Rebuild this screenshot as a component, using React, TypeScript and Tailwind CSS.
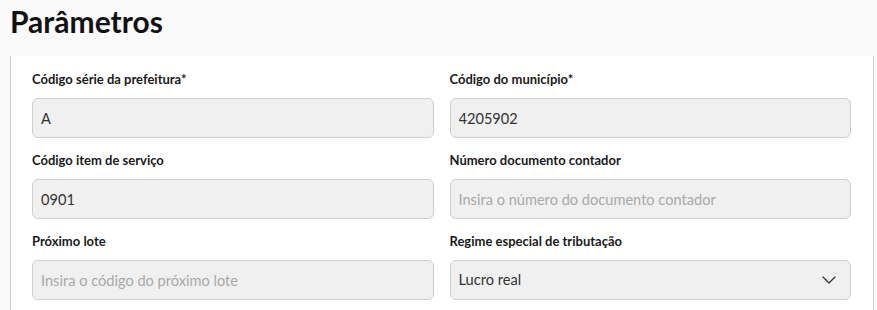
import { ChevronDown } from "lucide-react";

const font = { fontFamily: "Lato, 'Noto Sans', sans-serif" };

function Field({
  label,
  value,
  placeholder,
}: {
  label: string;
  value?: string;
  placeholder?: string;
}) {
  return (
    <div className="flex flex-col">
      <label className="mb-2 flex h-5 items-center text-[13px] font-bold text-[#1a1a1a]">{label}</label>
      <input
        readOnly
        value={value ?? ""}
        placeholder={placeholder}
        className="h-10 w-full rounded-md border border-[#cfcfcf] bg-[#f0f0f0] px-2 text-[14.6px] text-[#333] outline-none placeholder:text-[#a9a9a9]"
      />
    </div>
  );
}

export default function App() {
  return (
    <div className="min-h-[310px] bg-[#fafafa]" style={font}>
      <div className="flex h-14 items-start px-[10px] pt-[3px]">
        <h1 className="text-[30px] font-bold leading-9 text-[#111]">Parâmetros</h1>
      </div>
      <div className="ml-[10px] mr-[3px] border-x border-[#cfcfcf] bg-white pb-4 pl-[21px] pr-[22px] pt-[14px]">
        <div className="grid grid-cols-2 gap-x-4 gap-y-[13px]">
          <Field label="Código série da prefeitura*" value="A" />
          <Field label="Código do município*" value="4205902" />
          <Field label="Código item de serviço" value="0901" />
          <Field label="Número documento contador" placeholder="Insira o número do documento contador" />
          <Field label="Próximo lote" placeholder="Insira o código do próximo lote" />
          <div className="flex flex-col">
            <label className="mb-2 flex h-5 items-center text-[13px] font-bold text-[#1a1a1a]">
              Regime especial de tributação
            </label>
            <div className="flex h-10 items-center justify-between rounded-md border border-[#cfcfcf] bg-[#f0f0f0] pl-2 pr-[9px] text-[14.6px] text-[#333]">
              <span>Lucro real</span>
              <ChevronDown className="size-6 text-[#333]" strokeWidth={1.25} />
            </div>
          </div>
        </div>
      </div>
    </div>
  );
}
